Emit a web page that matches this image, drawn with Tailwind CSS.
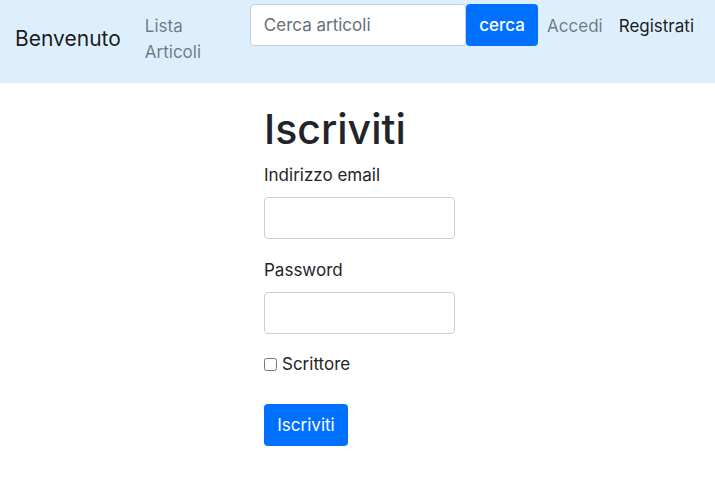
<!DOCTYPE html>
<html lang="it">
<head>
<meta charset="utf-8">
<meta name="viewport" content="width=device-width, initial-scale=1">
<title>Iscriviti</title>
<script src="https://cdn.jsdelivr.net/npm/@tailwindcss/browser@4"></script>
</head>
<body class="bg-white font-[Inter,sans-serif] text-[17px] leading-[26px] text-[#212529]">
<nav class="flex items-start bg-[#ddeffc] pr-4 pl-[15px] pt-1 pb-[18px]">
  <a href="#" class="mt-[19px] text-[21px] leading-8 text-black/90">Benvenuto</a>
  <a href="#" class="ml-6 mt-[9px] w-20 text-black/50">Lista Articoli</a>
  <form class="ml-[25px] flex flex-1">
    <input type="search" aria-label="Cerca articoli" placeholder="Cerca articoli" class="h-[42px] w-0 flex-1 rounded border border-[#c6cedb] bg-white px-[13px] placeholder:text-[#65707a]">
    <button type="submit" class="h-[42px] w-[72px] rounded bg-[#0070ff] text-center font-medium text-white">cerca</button>
  </form>
  <a href="#" class="ml-[9px] mt-[9px] text-black/50">Accedi</a>
  <a href="#" class="ml-4 mr-[5px] mt-[9px] text-black/90">Registrati</a>
</nav>
<main class="ml-[264px] pt-[21px]">
  <h1 class="text-[41px] leading-[50px] font-medium">Iscriviti</h1>
  <form class="flex flex-col items-start">
    <label for="email" class="mt-2">Indirizzo email</label>
    <input id="email" type="email" class="mt-[9px] h-[42px] w-[191px] rounded border border-[#c6cedb] px-3">
    <label for="password" class="mt-[18px]">Password</label>
    <input id="password" type="password" class="mt-[9px] h-[42px] w-[191px] rounded border border-[#c6cedb] px-3">
    <label class="mt-[17px] flex items-center gap-[5px]"><input type="checkbox" class="size-[13px]">Scrittore</label>
    <button type="submit" class="mt-[27px] h-[42px] w-[84px] rounded bg-[#0070ff] text-center text-white">Iscriviti</button>
  </form>
</main>
</body>
</html>
